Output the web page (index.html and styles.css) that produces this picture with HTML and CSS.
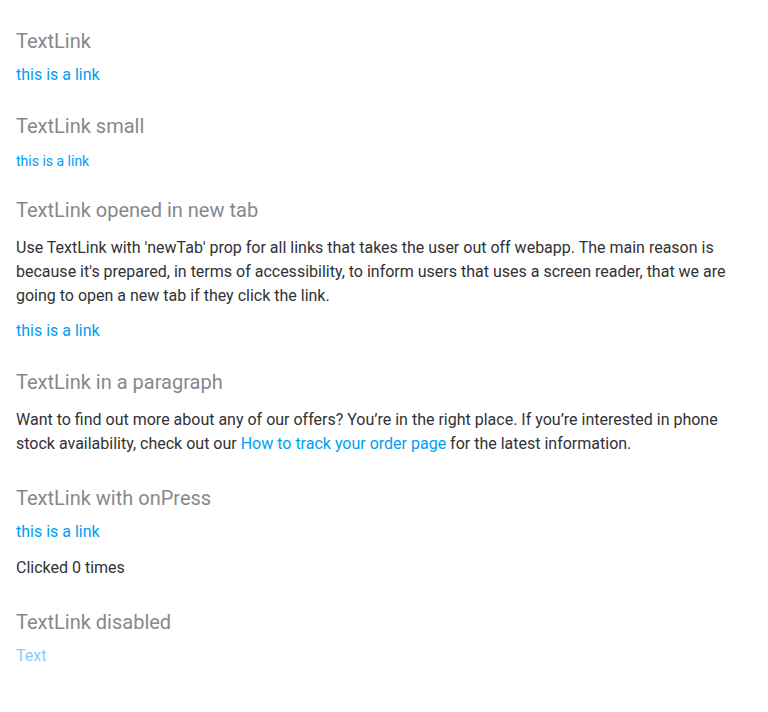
FILE: index.html
```html
<!DOCTYPE html>
<html>
<head>
<meta charset="utf-8">
<link rel="stylesheet" href="styles.css">
</head>
<body>
<main class="page">
  <section class="section">
    <h2 class="title">TextLink</h2>
    <div class="content">
      <a class="link" href="#">this is a link</a>
    </div>
  </section>
  <section class="section">
    <h2 class="title">TextLink small</h2>
    <div class="content">
      <a class="link link-small" href="#">this is a link</a>
    </div>
  </section>
  <section class="section">
    <h2 class="title">TextLink opened in new tab</h2>
    <div class="content">
      <p class="text">Use TextLink with 'newTab' prop for all links that takes the user out off webapp. The main reason is because it's prepared, in terms of accessibility, to inform users that uses a screen reader, that we are going to open a new tab if they click the link.</p>
      <a class="link" href="#">this is a link</a>
    </div>
  </section>
  <section class="section">
    <h2 class="title">TextLink in a paragraph</h2>
    <div class="content">
      <p class="text">Want to find out more about any of our offers? You’re in the right place. If you’re interested in phone stock availability, check out our <a class="link inline-link" href="#">How to track your order page</a> for the latest information.</p>
    </div>
  </section>
  <section class="section">
    <h2 class="title">TextLink with onPress</h2>
    <div class="content">
      <a class="link" href="#">this is a link</a>
      <p class="text">Clicked 0 times</p>
    </div>
  </section>
  <section class="section">
    <h2 class="title">TextLink disabled</h2>
    <div class="content">
      <span class="link link-disabled">Text</span>
    </div>
  </section>
</main>
</body>
</html>
```
FILE: styles.css
```css
html, body {
  margin: 0;
  padding: 0;
  background: #ffffff;
}
body {
  font-family: Roboto, "Liberation Sans", sans-serif;
  color: #313235;
}
.page {
  padding: 27px 16px 16px;
  display: flex;
  flex-direction: column;
  gap: 25px;
}
.section {
  display: flex;
  flex-direction: column;
}
.title {
  margin: 0 0 8px;
  font-size: 20px;
  line-height: 28px;
  font-weight: 400;
  color: #86888c;
}
.content {
  display: flex;
  flex-direction: column;
  align-items: flex-start;
  gap: 8px;
}
.text {
  margin: 4px 0 3px;
  font-size: 16px;
  line-height: 24px;
  color: #313235;
}
.link {
  font-size: 16px;
  line-height: 24px;
  color: #019df4;
  text-decoration: none;
}
.inline-link {
  line-height: inherit;
}
.link-small {
  font-size: 14px;
  line-height: 20px;
  margin-top: 3px;
}
.link-disabled {
  opacity: 0.5;
}
```
